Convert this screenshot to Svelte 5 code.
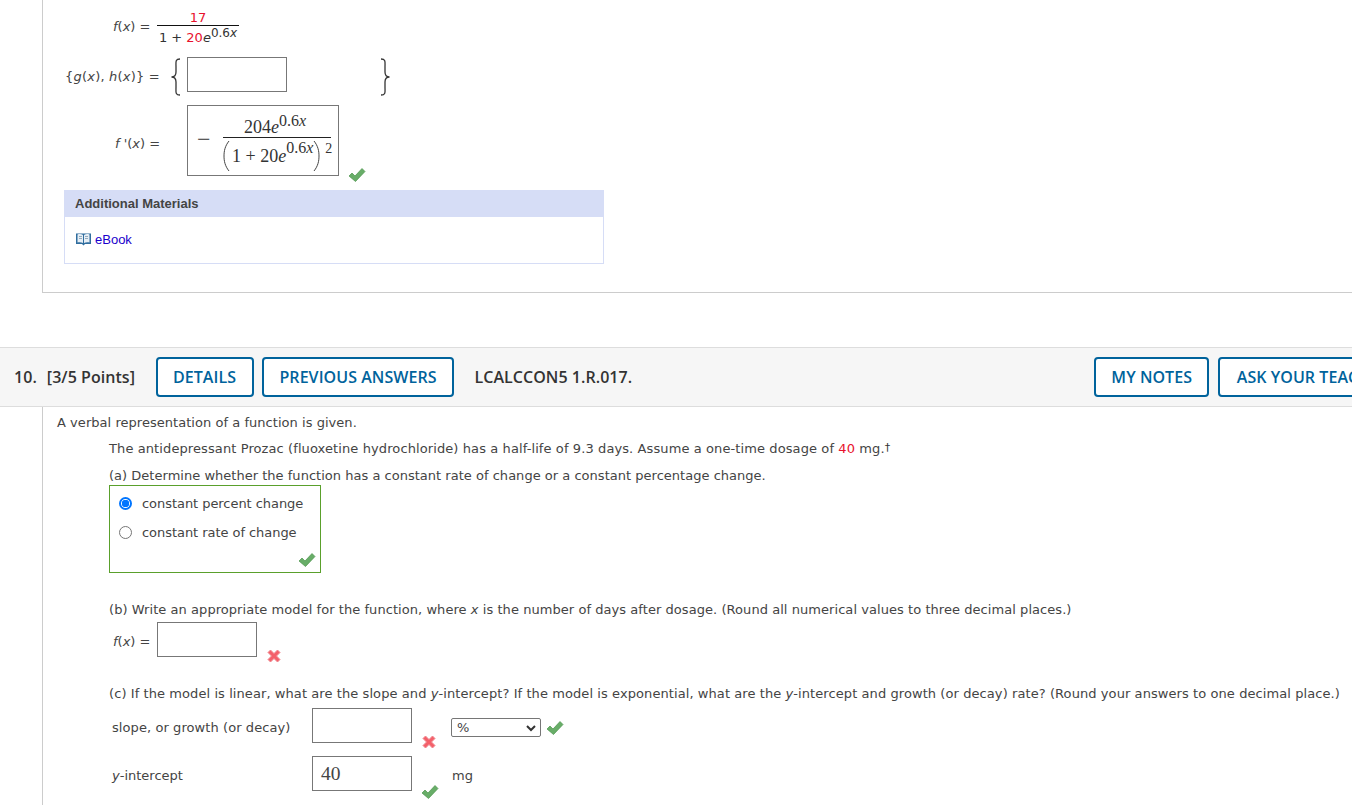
<script>
    const check = 'M1 9 L4 6 L7 9 L14 1.5 L17 4.5 L7.5 14.5 Z'
    const cross = 'M1 3.5 L3.5 1 L7 4.5 L10.5 1 L13 3.5 L9.5 7 L13 10.5 L10.5 13 L7 9.5 L3.5 13 L1 10.5 L4.5 7 Z'
</script>

{#snippet ok()}
    <svg class="ok" width="18" height="16" viewBox="0 0 18 16"><path d={check} fill="#68ad68" stroke="#4a934a" stroke-width=".7"/></svg>
{/snippet}
{#snippet bad()}
    <svg class="bad" width="14" height="14" viewBox="0 0 14 14"><path d={cross} fill="#f4606a" stroke="#f08a92" stroke-width="1"/></svg>
{/snippet}

<div class="page">
    <div class="prev">
        <div class="row-fx">
            <span class="lbl"><i>f</i>(<i>x</i>) =</span>
            <span class="frac">
                <span class="num red">17</span>
                <span class="den">1 + <span class="red">20</span><i>e</i><sup>0.6<i>x</i></sup></span>
            </span>
        </div>
        <div class="row-gh">
            <span class="lbl"><span>{'{'}</span><i>g</i>(<i>x</i>), <i>h</i>(<i>x</i>){'}'} =</span>
            <svg class="brace" width="12" height="38" viewBox="0 0 12 38"><path d="M10 1 C5 1 6 4 6 9 L6 14 C6 17 5 19 1.500 19 C5 19 6 21 6 24 L6 29 C6 34 5 37 10 37" fill="none" stroke="#333" stroke-width="1.300"/></svg>
            <div class="box"></div>
            <svg class="brace close" width="12" height="38" viewBox="0 0 12 38"><path d="M2 1 C7 1 6 4 6 9 L6 14 C6 17 7 19 10.500 19 C7 19 6 21 6 24 L6 29 C6 34 7 37 2 37" fill="none" stroke="#333" stroke-width="1.300"/></svg>
        </div>
        <div class="row-df">
            <span class="lbl"><i>f</i> '(<i>x</i>) =</span>
            <div class="box answer">
                <span class="minus">−</span>
                <span class="mfrac">
                    <span class="mnum">204<i>e</i><sup>0.6<i>x</i></sup></span>
                    <span class="mden">
                        <svg class="paren" width="7" height="32" viewBox="0 0 7 32"><path d="M6 1 C2 6 1 11 1 16 C1 21 2 26 6 31" fill="none" stroke="#444" stroke-width="1"/></svg>
                        <span class="mtext">1 + 20<i>e</i><sup>0.6<i>x</i></sup></span>
                        <svg class="paren" width="7" height="32" viewBox="0 0 7 32"><path d="M1 1 C5 6 6 11 6 16 C6 21 5 26 1 31" fill="none" stroke="#444" stroke-width="1"/></svg>
                        <sup class="sq">2</sup>
                    </span>
                </span>
            </div>
            {@render ok()}
        </div>
        <div class="materials">
            <div class="mat-head">Additional Materials</div>
            <div class="mat-body">
                <svg width="17" height="14" viewBox="0 0 17 14">
                    <path d="M1 1.500 H16 V12 H10 L8.500 13.500 L7 12 H1 Z" fill="#2f6d9e"/>
                    <path d="M2.500 2.500 C4.500 1.800 6.500 2 8 3 V11 C6.500 10.200 4.500 10 2.500 10.500 Z M9 3 C10.500 2 12.500 1.800 14.500 2.500 V10.500 C12.500 10 10.500 10.200 9 11 Z" fill="#e6eef5"/>
                    <path d="M4 4.500 H7 M4 6.500 H7 M10 4.500 H13 M10 6.500 H13" stroke="#7d99b0" stroke-width=".8"/>
                </svg>
                <span>eBook</span>
            </div>
        </div>
    </div>

    <div class="qhead">
        <span class="qnum">10.</span>
        <span class="points">[3/5 Points]</span>
        <button class="details">DETAILS</button>
        <button class="previous">PREVIOUS ANSWERS</button>
        <span class="code">LCALCCON5 1.R.017.</span>
        <button class="notes">MY NOTES</button>
        <button class="ask">ASK YOUR TEACHER</button>
    </div>

    <div class="qbody">
        <p class="intro">A verbal representation of a function is given.</p>
        <div class="indent">
            <p class="prozac">The antidepressant Prozac (fluoxetine hydrochloride) has a half-life of 9.3 days. Assume a one-time dosage of <span class="red">40</span> mg.<span class="dagger">†</span></p>
            <p class="parta">(a) Determine whether the function has a constant rate of change or a constant percentage change.</p>
            <div class="choices">
                <div class="choice"><span class="radio on"></span>constant percent change</div>
                <div class="choice second"><span class="radio"></span>constant rate of change</div>
                <div class="choice-ok">{@render ok()}</div>
            </div>
            <p class="partb">(b) Write an appropriate model for the function, where <i>x</i> is the number of days after dosage. (Round all numerical values to three decimal places.)</p>
            <div class="row-b">
                <span class="fx"><i>f</i>(<i>x</i>) =</span>
                <div class="box"></div>
                {@render bad()}
            </div>
            <p class="partc">(c) If the model is linear, what are the slope and <i>y</i>-intercept? If the model is exponential, what are the <i>y</i>-intercept and growth (or decay) rate? (Round your answers to one decimal place.)</p>
            <div class="row-c">
                <span class="rowlbl slope">slope, or growth (or decay)</span>
                <div class="box"></div>
                {@render bad()}
                <div class="select">%<svg width="12" height="8" viewBox="0 0 12 8"><path d="M2 2 L6 6 L10 2" fill="none" stroke="#333" stroke-width="2"/></svg></div>
                {@render ok()}
            </div>
            <div class="row-c last">
                <span class="rowlbl"><i>y</i>-intercept</span>
                <div class="box value">40</div>
                {@render ok()}
                <span class="unit">mg</span>
            </div>
        </div>
    </div>
</div>

<style>
    :global(body) {
        overflow: hidden;
        background: #fff;
    }

    .page {
        width: 1352px;
        height: 805px;
        overflow: hidden;
        font-family: "DejaVu Sans", Verdana, sans-serif;
        font-size: 13px;
        color: #444;
    }

    p {
        margin: 0;
    }

    .red {
        color: #e8112d;
    }

    sup {
        font-size: 12px;
        line-height: 0;
    }

    .prev {
        margin-left: 42px;
        height: 292px;
        border-left: 1px solid #ccc;
        border-bottom: 1px solid #ccc;
        box-sizing: content-box;
    }

    .row-fx {
        display: flex;
        align-items: flex-start;
        height: 34px;
        padding: 10px 0 0 70px;
    }

    .row-fx .lbl {
        width: 44px;
        margin-top: 8px;
        line-height: 18px;
    }

    .frac {
        display: flex;
        flex-direction: column;
        align-items: center;
        width: 82px;
        color: #333;
    }

    .num {
        line-height: 15px;
        height: 15px;
    }

    .den {
        align-self: stretch;
        text-align: center;
        border-top: 1px solid #111;
        line-height: 24px;
        white-space: nowrap;
    }

    .row-gh {
        display: flex;
        align-items: center;
        height: 35px;
        margin-top: 13px;
        padding-left: 22px;
    }

    .row-gh .lbl {
        width: 105px;
        margin-top: 4px;
        letter-spacing: .2px;
    }

    .brace {
        margin-top: 4px;
    }

    .brace.close {
        margin-left: 92px;
    }

    .box {
        flex: none;
        box-sizing: border-box;
        width: 100px;
        height: 35px;
        border: 1px solid #777;
        background: #fff;
    }

    .row-gh .box {
        margin-left: 5px;
    }

    .row-df {
        display: flex;
        align-items: flex-start;
        margin-top: 13px;
        padding-left: 72px;
    }

    .row-df .lbl {
        width: 72px;
        margin-top: 31px;
    }

    .answer {
        display: flex;
        align-items: center;
        width: 152px;
        height: 71px;
        padding-left: 9px;
        font-family: "Liberation Serif", "Times New Roman", serif;
        font-size: 18px;
        color: #333;
    }

    .minus {
        width: 26px;
        margin-top: -4px;
        font-size: 24px;
        line-height: 24px;
    }

    .mfrac {
        display: flex;
        flex-direction: column;
        align-items: center;
        width: 108px;
    }

    .mnum {
        height: 29px;
        margin-left: -4px;
        line-height: 39px;
    }

    .mnum sup {
        top: 0;
    }

    .mden {
        display: flex;
        align-items: center;
        align-self: stretch;
        height: 36px;
        border-top: 1px solid #222;
        white-space: nowrap;
    }

    .mtext {
        margin: 0 0 0 2px;
        line-height: 36px;
    }

    .mfrac sup {
        font-size: 16px;
        position: relative;
    }

    .mtext sup {
        top: -2px;
    }

    .paren {
        flex: none;
    }

    .mden .sq {
        margin: -14px 0 0 5px;
        top: 0;
        font-size: 14px;
    }

    .ok,
    .bad {
        flex: none;
    }

    .row-df .ok {
        margin: 62px 0 0 9px;
    }

    .materials {
        width: 540px;
        margin: 7px 0 0 21px;
        box-sizing: border-box;
        height: 74px;
        border: 1px solid #d6ddf6;
        border-top: 0;
        font-family: "Liberation Sans", Arial, sans-serif;
        font-size: 13px;
    }

    .mat-head {
        margin: 0 -1px;
        height: 27px;
        line-height: 27px;
        padding-left: 11px;
        background: #d6ddf6;
        font-weight: 700;
        color: #444;
    }

    .mat-body {
        display: flex;
        align-items: center;
        gap: 3px;
        height: 44px;
        padding-left: 10px;
        color: #1a00cc;
    }

    .qhead {
        display: flex;
        align-items: center;
        box-sizing: border-box;
        height: 60px;
        margin-top: 54px;
        padding-left: 14px;
        background: #f6f6f6;
        border-top: 1px solid #ddd;
        border-bottom: 1px solid #ddd;
        font-family: "Open Sans", sans-serif;
        font-size: 16px;
        font-weight: 600;
        letter-spacing: .05px;
        color: #333;
        white-space: nowrap;
    }

    .points {
        margin-left: 10px;
    }

    button {
        flex: none;
        box-sizing: border-box;
        height: 40px;
        padding: 0;
        background: #fff;
        border: 2px solid #00639c;
        border-radius: 4px;
        font: inherit;
        letter-spacing: inherit;
        color: #00639c;
    }

    .details {
        width: 98px;
        margin-left: 20.500px;
    }

    .previous {
        width: 192px;
        margin-left: 8.500px;
    }

    .code {
        margin-left: 20.500px;
    }

    .notes {
        width: 115px;
        margin-left: 462px;
    }

    .ask {
        width: 190px;
        margin-left: 9px;
    }

    .qbody {
        margin-left: 42px;
        height: 398px;
        border-left: 1px solid #ccc;
        padding: 7px 0 0 14px;
        white-space: nowrap;
    }

    .intro {
        line-height: 18px;
        letter-spacing: .04px;
    }

    .indent {
        margin-left: 52px;
    }

    .prozac {
        margin-top: 7px;
        line-height: 18px;
        letter-spacing: .1px;
    }

    .dagger {
        font-size: 11px;
        color: #333;
        vertical-align: 2px;
    }

    .parta {
        margin-top: 9px;
        line-height: 18px;
        letter-spacing: .02px;
    }

    .choices {
        box-sizing: border-box;
        width: 212px;
        height: 88px;
        border: 1px solid #5aa02c;
        padding: 8px 0 0 9px;
        position: relative;
    }

    .choice {
        display: flex;
        align-items: center;
        gap: 10px;
        height: 18px;
        letter-spacing: -.05px;
    }

    .choice.second {
        margin-top: 11px;
    }

    .radio {
        box-sizing: border-box;
        width: 13px;
        height: 13px;
        border: 1px solid #767676;
        border-radius: 50%;
        background: #fff;
    }

    .radio.on {
        border: 2px solid #0075ff;
        background: radial-gradient(circle, #0075ff 0 3.500px, #fff 4px);
    }

    .choice-ok {
        position: absolute;
        right: 4px;
        bottom: 4px;
        line-height: 0;
    }

    .partb {
        margin-top: 28px;
        line-height: 18px;
        letter-spacing: .056px;
    }

    .row-b {
        display: flex;
        align-items: flex-start;
        margin-top: 3px;
        padding-left: 4px;
    }

    .fx {
        width: 44px;
        margin-top: 12px;
    }

    .row-b .bad {
        margin: 27px 0 0 10px;
    }

    .partc {
        margin-top: 22px;
        line-height: 18px;
        letter-spacing: .08px;
    }

    .row-c {
        display: flex;
        align-items: flex-start;
        margin-top: 5px;
        padding-left: 3px;
    }

    .row-c.last {
        margin-top: 7px;
    }

    .rowlbl {
        width: 200px;
        margin-top: 12px;
    }

    .slope {
        letter-spacing: .08px;
    }

    .row-c .bad {
        margin: 27px 0 0 10px;
    }

    .row-c .ok {
        margin-top: 12px;
        margin-left: 5px;
    }

    .row-c.last .ok {
        margin: 28px 0 0 9px;
    }

    .select {
        display: flex;
        align-items: center;
        justify-content: space-between;
        box-sizing: border-box;
        width: 90px;
        height: 19px;
        margin: 10px 0 0 15px;
        padding: 0 3px 0 5px;
        border: 1px solid #767676;
        border-radius: 2px;
    }

    .value {
        padding-left: 8px;
        font-family: "Liberation Serif", "Times New Roman", serif;
        font-size: 19.500px;
        line-height: 33px;
    }

    .unit {
        margin: 12px 0 0 13px;
    }
</style>
